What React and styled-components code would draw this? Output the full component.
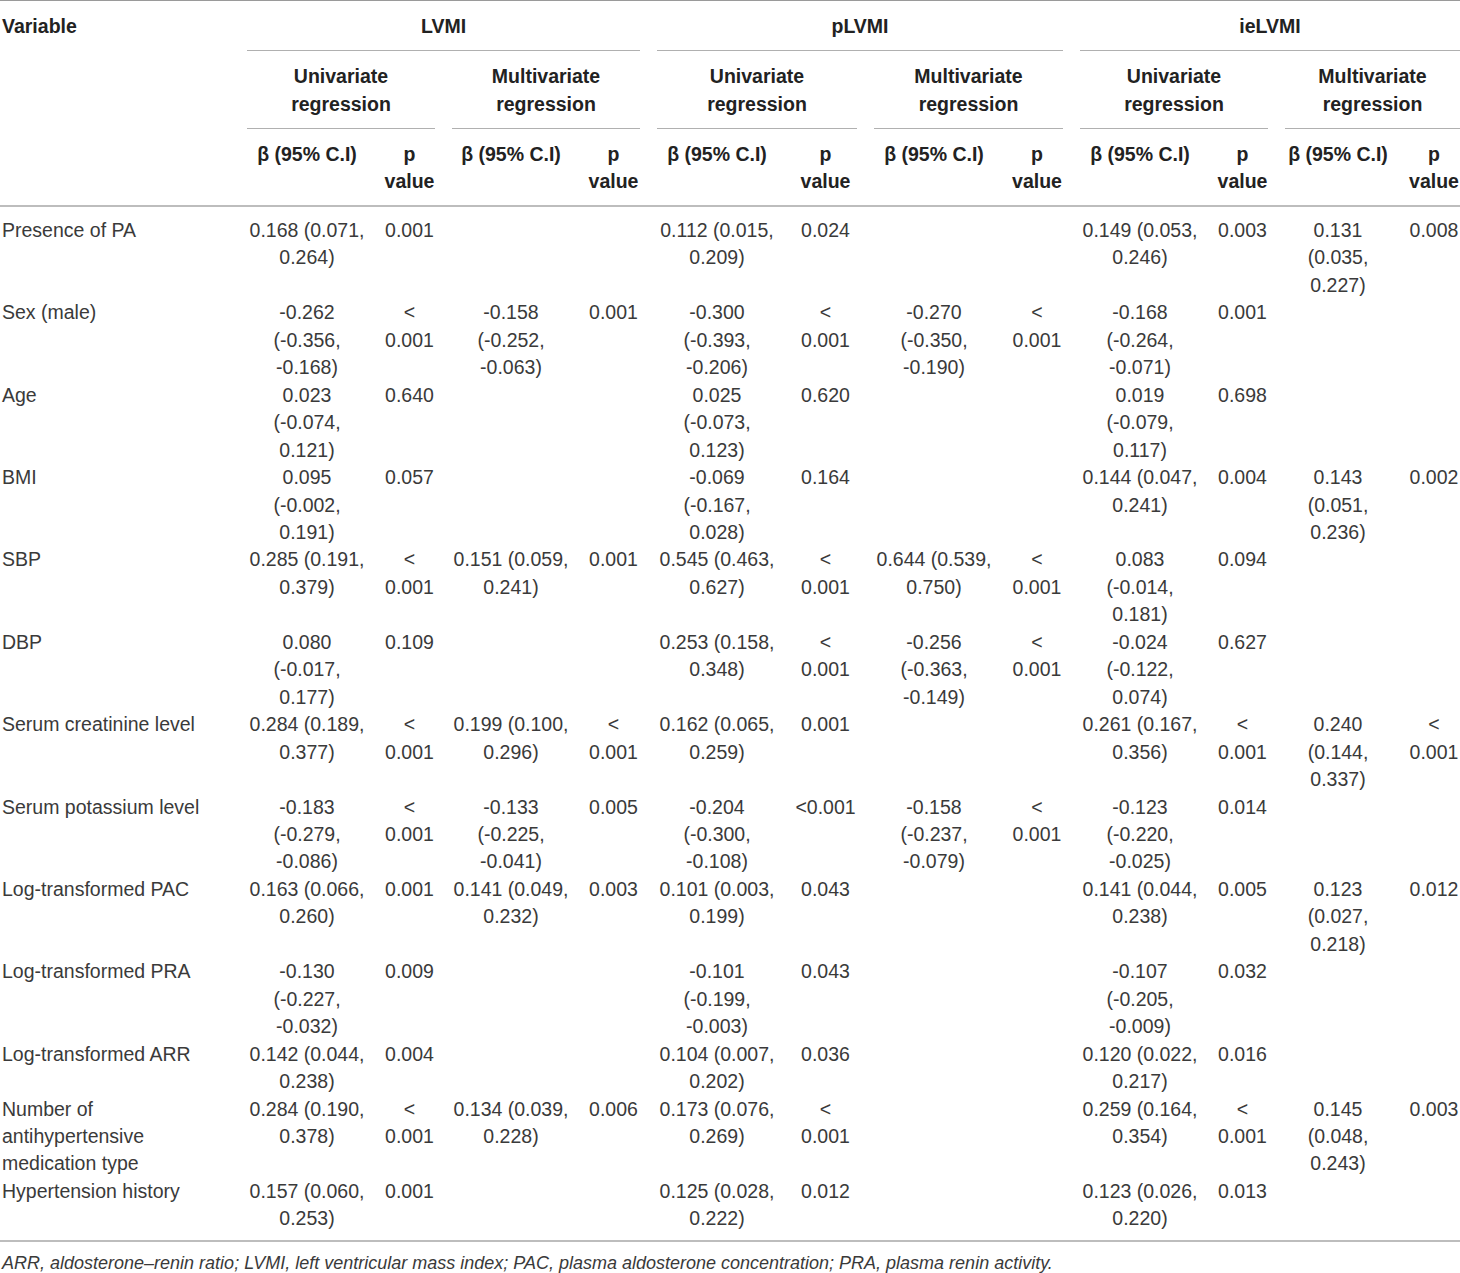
import React from 'react';
import styled, { createGlobalStyle } from 'styled-components';

const COLS = '230px 120px 51px 118px 53px 120px 63px 120px 52px 120px 51px 106px 52px';

const groups = ['LVMI', 'pLVMI', 'ieLVMI'];

const rows = [
  ['Presence of PA', '0.168 (0.071,\n0.264)', '0.001', '', '', '0.112 (0.015,\n0.209)', '0.024', '', '', '0.149 (0.053,\n0.246)', '0.003', '0.131\n(0.035,\n0.227)', '0.008'],
  ['Sex (male)', '-0.262\n(-0.356,\n-0.168)', '<\n0.001', '-0.158\n(-0.252,\n-0.063)', '0.001', '-0.300\n(-0.393,\n-0.206)', '<\n0.001', '-0.270\n(-0.350,\n-0.190)', '<\n0.001', '-0.168\n(-0.264,\n-0.071)', '0.001', '', ''],
  ['Age', '0.023\n(-0.074,\n0.121)', '0.640', '', '', '0.025\n(-0.073,\n0.123)', '0.620', '', '', '0.019\n(-0.079,\n0.117)', '0.698', '', ''],
  ['BMI', '0.095\n(-0.002,\n0.191)', '0.057', '', '', '-0.069\n(-0.167,\n0.028)', '0.164', '', '', '0.144 (0.047,\n0.241)', '0.004', '0.143\n(0.051,\n0.236)', '0.002'],
  ['SBP', '0.285 (0.191,\n0.379)', '<\n0.001', '0.151 (0.059,\n0.241)', '0.001', '0.545 (0.463,\n0.627)', '<\n0.001', '0.644 (0.539,\n0.750)', '<\n0.001', '0.083\n(-0.014,\n0.181)', '0.094', '', ''],
  ['DBP', '0.080\n(-0.017,\n0.177)', '0.109', '', '', '0.253 (0.158,\n0.348)', '<\n0.001', '-0.256\n(-0.363,\n-0.149)', '<\n0.001', '-0.024\n(-0.122,\n0.074)', '0.627', '', ''],
  ['Serum creatinine level', '0.284 (0.189,\n0.377)', '<\n0.001', '0.199 (0.100,\n0.296)', '<\n0.001', '0.162 (0.065,\n0.259)', '0.001', '', '', '0.261 (0.167,\n0.356)', '<\n0.001', '0.240\n(0.144,\n0.337)', '<\n0.001'],
  ['Serum potassium level', '-0.183\n(-0.279,\n-0.086)', '<\n0.001', '-0.133\n(-0.225,\n-0.041)', '0.005', '-0.204\n(-0.300,\n-0.108)', '<0.001', '-0.158\n(-0.237,\n-0.079)', '<\n0.001', '-0.123\n(-0.220,\n-0.025)', '0.014', '', ''],
  ['Log-transformed PAC', '0.163 (0.066,\n0.260)', '0.001', '0.141 (0.049,\n0.232)', '0.003', '0.101 (0.003,\n0.199)', '0.043', '', '', '0.141 (0.044,\n0.238)', '0.005', '0.123\n(0.027,\n0.218)', '0.012'],
  ['Log-transformed PRA', '-0.130\n(-0.227,\n-0.032)', '0.009', '', '', '-0.101\n(-0.199,\n-0.003)', '0.043', '', '', '-0.107\n(-0.205,\n-0.009)', '0.032', '', ''],
  ['Log-transformed ARR', '0.142 (0.044,\n0.238)', '0.004', '', '', '0.104 (0.007,\n0.202)', '0.036', '', '', '0.120 (0.022,\n0.217)', '0.016', '', ''],
  ['Number of\nantihypertensive\nmedication type', '0.284 (0.190,\n0.378)', '<\n0.001', '0.134 (0.039,\n0.228)', '0.006', '0.173 (0.076,\n0.269)', '<\n0.001', '', '', '0.259 (0.164,\n0.354)', '<\n0.001', '0.145\n(0.048,\n0.243)', '0.003'],
  ['Hypertension history', '0.157 (0.060,\n0.253)', '0.001', '', '', '0.125 (0.028,\n0.222)', '0.012', '', '', '0.123 (0.026,\n0.220)', '0.013', '', ''],
];

export default function App() {
  return (
    <>
      <GlobalStyle />
      <Page>
        <Header>
          <HeadCell $col="1" $row="1 / span 3" $align="left">Variable</HeadCell>
          {groups.map((g, i) => (
            <React.Fragment key={g}>
              <HeadCell $col={`${2 + i * 4} / span 4`} $row="1" $rule>{g}</HeadCell>
              <HeadCell $col={`${2 + i * 4} / span 2`} $row="2" $rule>{'Univariate\nregression'}</HeadCell>
              <HeadCell $col={`${4 + i * 4} / span 2`} $row="2" $rule>{'Multivariate\nregression'}</HeadCell>
              {[0, 2].map((o) => (
                <React.Fragment key={o}>
                  <HeadCell $col={`${2 + i * 4 + o}`} $row="3">β (95% C.I)</HeadCell>
                  <HeadCell $col={`${3 + i * 4 + o}`} $row="3">{'p\nvalue'}</HeadCell>
                </React.Fragment>
              ))}
            </React.Fragment>
          ))}
        </Header>
        <Body>
          {rows.map((r) => (
            <Row key={r[0]}>
              <VarCell>{r[0]}</VarCell>
              {r.slice(1).map((v, j) => (
                <Cell key={j}>{v}</Cell>
              ))}
            </Row>
          ))}
        </Body>
        <Footnote>
          ARR, aldosterone–renin ratio; LVMI, left ventricular mass index; PAC, plasma aldosterone concentration; PRA, plasma renin activity.
        </Footnote>
      </Page>
    </>
  );
}

const GlobalStyle = createGlobalStyle`
  body {
    margin: 0;
    background: #ffffff;
    font-family: "Liberation Sans", Arial, sans-serif;
    color: #3a3a3a;
  }
`;

const Page = styled.div`
  width: 1460px;
  font-size: 19.5px;
`;

const Header = styled.div`
  display: grid;
  grid-template-columns: ${COLS};
  column-gap: 17px;
  border-top: 1px solid #9a9a9a;
  border-bottom: 2px solid #bdbdbd;
`;

const HeadCell = styled.div`
  grid-column: ${(p) => p.$col};
  grid-row: ${(p) => p.$row};
  padding: 12px 0 9.5px ${(p) => (p.$align === 'left' ? '2px' : '0')};
  text-align: ${(p) => p.$align || 'center'};
  font-weight: bold;
  color: #222222;
  line-height: 27.5px;
  white-space: pre-line;
  border-bottom: ${(p) => (p.$rule ? '1px solid #b0b0b0' : 'none')};
`;

const Body = styled.div`
  padding: 10px 0 7px;
  border-bottom: 2px solid #bdbdbd;
`;

const Row = styled.div`
  display: grid;
  grid-template-columns: ${COLS};
  column-gap: 17px;
  line-height: 27.45px;
`;

const Cell = styled.div`
  text-align: center;
  white-space: pre-line;
`;

const VarCell = styled(Cell)`
  text-align: left;
  padding-left: 2px;
`;

const Footnote = styled.p`
  margin: 0;
  padding: 9px 0 0 2px;
  font-size: 18px;
  font-style: italic;
  line-height: 24px;
`;
